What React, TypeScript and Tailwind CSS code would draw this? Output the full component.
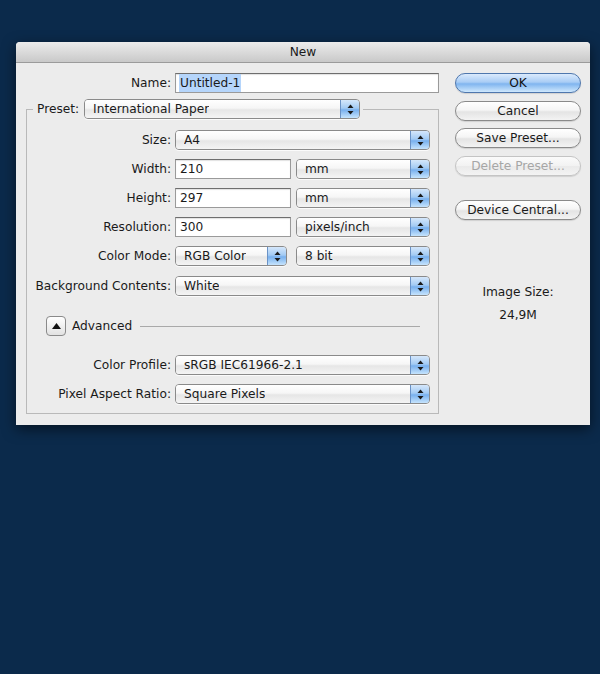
import type { ReactNode } from "react";

const font = "font-['DejaVu_Sans',_'Liberation_Sans',_sans-serif]";

function Arrows() {
  return (
    <svg width="7" height="11" viewBox="0 0 7 11">
      <path d="M3.5 0.5 L6.5 4 L0.5 4 Z" fill="#1a1a1a" />
      <path d="M3.5 10.5 L6.5 7 L0.5 7 Z" fill="#1a1a1a" />
    </svg>
  );
}

function Popup({ text, className }: { text: string; className: string }) {
  return (
    <div
      className={`flex h-[20px] items-stretch overflow-hidden rounded-[4px] border border-[#8a8a8a] shadow-[0_1px_0_rgba(255,255,255,0.8)] ${className}`}
    >
      <div className="flex min-w-0 flex-1 items-center bg-[linear-gradient(to_bottom,#ffffff_0%,#f6f6f6_45%,#e6e6e6_55%,#f4f4f4_100%)] pl-[8px] text-[12.2px] text-[#1a1a1a]">
        <span className="truncate">{text}</span>
      </div>
      <div className="flex w-[19px] items-center justify-center border-l border-[#6a92c6] bg-[linear-gradient(to_bottom,#d5e7fb_0%,#a3cbf4_45%,#78b0ee_55%,#c6e4fd_100%)]">
        <Arrows />
      </div>
    </div>
  );
}

function Field({ value, className, selected = false }: { value: string; className: string; selected?: boolean }) {
  return (
    <div
      className={`flex h-[20px] items-center border border-[#9a9a9a] border-t-[#6e6e6e] bg-white pl-[3px] text-[12.2px] text-[#1a1a1a] shadow-[inset_0_1px_1px_rgba(0,0,0,0.12)] ${className}`}
    >
      <span className={selected ? "bg-[#b5d5fb] px-[1px]" : "px-[1px]"}>{value}</span>
    </div>
  );
}

function Row({ label, children }: { label: string; children: ReactNode }) {
  return (
    <div className="flex h-[20px] items-center">
      <div className="w-[148px] pr-[4px] text-right text-[12.2px] text-[#1a1a1a]">{label}</div>
      {children}
    </div>
  );
}

function Button({ children, primary = false, disabled = false }: { children: ReactNode; primary?: boolean; disabled?: boolean }) {
  const tone = primary
    ? "border-[#4f77ad] bg-[linear-gradient(to_bottom,#dbeafc_0%,#a9cdf5_45%,#80b5ef_55%,#cfe8fd_100%)] text-[#111]"
    : disabled
      ? "border-[#c4c4c4] bg-[linear-gradient(to_bottom,#fbfbfb_0%,#f2f2f2_50%,#eaeaea_51%,#f3f3f3_100%)] text-[#a6a6a6]"
      : "border-[#8a8a8a] bg-[linear-gradient(to_bottom,#ffffff_0%,#f5f5f5_45%,#e4e4e4_55%,#f3f3f3_100%)] text-[#1a1a1a]";
  return (
    <div
      className={`flex h-[20px] w-[126px] items-center justify-center rounded-full border text-[12.2px] shadow-[0_1px_1px_rgba(0,0,0,0.12)] ${tone}`}
    >
      {children}
    </div>
  );
}

export default function App() {
  return (
    <div className={`h-[674px] w-[600px] overflow-hidden bg-[#0b2a4b] pt-[42px] pl-[16px] ${font}`}>
      <div className="flex h-[383px] w-[574px] flex-col overflow-hidden rounded-t-[4px] bg-[#ececec] shadow-[0_4px_14px_rgba(0,0,0,0.55)]">
        <div className="flex h-[21px] items-center justify-center border-b border-[#9b9b9b] bg-[linear-gradient(to_bottom,#ececec,#c9c9c9)] text-[12.2px] text-[#1a1a1a]">
          New
        </div>
        <div className="flex flex-1">
          <div className="flex w-[424px] flex-col pt-[10px] pl-[10px]">
            <div className="flex h-[20px] items-center">
              <div className="w-[149px] pr-[4px] text-right text-[12.2px] text-[#1a1a1a]">Name:</div>
              <Field value="Untitled-1" className="w-[264px]" selected />
            </div>
            <fieldset className="mt-[6px] w-[413px] border border-[#b9b9b9] px-0 pb-[9px]">
              <legend className="ml-[6px] pr-[3px] pl-[4px]">
                <div className="flex h-[20px] items-center">
                  <span className="pr-[5px] text-[12.2px] text-[#1a1a1a]">Preset:</span>
                  <Popup text="International Paper" className="w-[276px]" />
                </div>
              </legend>
              <div className="mt-[11px] flex flex-col gap-[9px]">
                <Row label="Size:">
                  <Popup text="A4" className="w-[255px]" />
                </Row>
                <Row label="Width:">
                  <Field value="210" className="w-[116px]" />
                  <Popup text="mm" className="ml-[5px] w-[134px]" />
                </Row>
                <Row label="Height:">
                  <Field value="297" className="w-[116px]" />
                  <Popup text="mm" className="ml-[5px] w-[134px]" />
                </Row>
                <Row label="Resolution:">
                  <Field value="300" className="w-[116px]" />
                  <Popup text="pixels/inch" className="ml-[5px] w-[134px]" />
                </Row>
                <Row label="Color Mode:">
                  <Popup text="RGB Color" className="w-[112px]" />
                  <Popup text="8 bit" className="ml-[9px] w-[134px]" />
                </Row>
                <div className="mt-[1px]">
                  <Row label="Background Contents:">
                    <Popup text="White" className="w-[255px]" />
                  </Row>
                </div>
                <div className="mt-[11px] flex h-[20px] items-center pl-[19px]">
                  <div className="flex h-[20px] w-[20px] items-center justify-center rounded-[4px] border border-[#8a8a8a] bg-[linear-gradient(to_bottom,#ffffff,#e2e2e2)]">
                    <svg width="9" height="6" viewBox="0 0 9 6">
                      <path d="M4.5 0 L9 6 L0 6 Z" fill="#111" />
                    </svg>
                  </div>
                  <span className="ml-[6px] text-[12.2px] text-[#1a1a1a]">Advanced</span>
                  <div className="ml-[8px] h-px w-[280px] bg-[#a9a9a9]" />
                </div>
                <div className="mt-[10px]">
                  <Row label="Color Profile:">
                    <Popup text="sRGB IEC61966-2.1" className="w-[255px]" />
                  </Row>
                </div>
                <Row label="Pixel Aspect Ratio:">
                  <Popup text="Square Pixels" className="w-[255px]" />
                </Row>
              </div>
            </fieldset>
          </div>
          <div className="flex flex-col pt-[10px] pl-[15px]">
            <Button primary>OK</Button>
            <div className="mt-[8px]">
              <Button>Cancel</Button>
            </div>
            <div className="mt-[7px]">
              <Button>Save Preset...</Button>
            </div>
            <div className="mt-[8px]">
              <Button disabled>Delete Preset...</Button>
            </div>
            <div className="mt-[24px]">
              <Button>Device Central...</Button>
            </div>
            <div className="mt-[63px] flex w-[126px] flex-col items-center gap-[5px] text-[12.2px] text-[#1a1a1a]">
              <span>Image Size:</span>
              <span>24,9M</span>
            </div>
          </div>
        </div>
      </div>
    </div>
  );
}
